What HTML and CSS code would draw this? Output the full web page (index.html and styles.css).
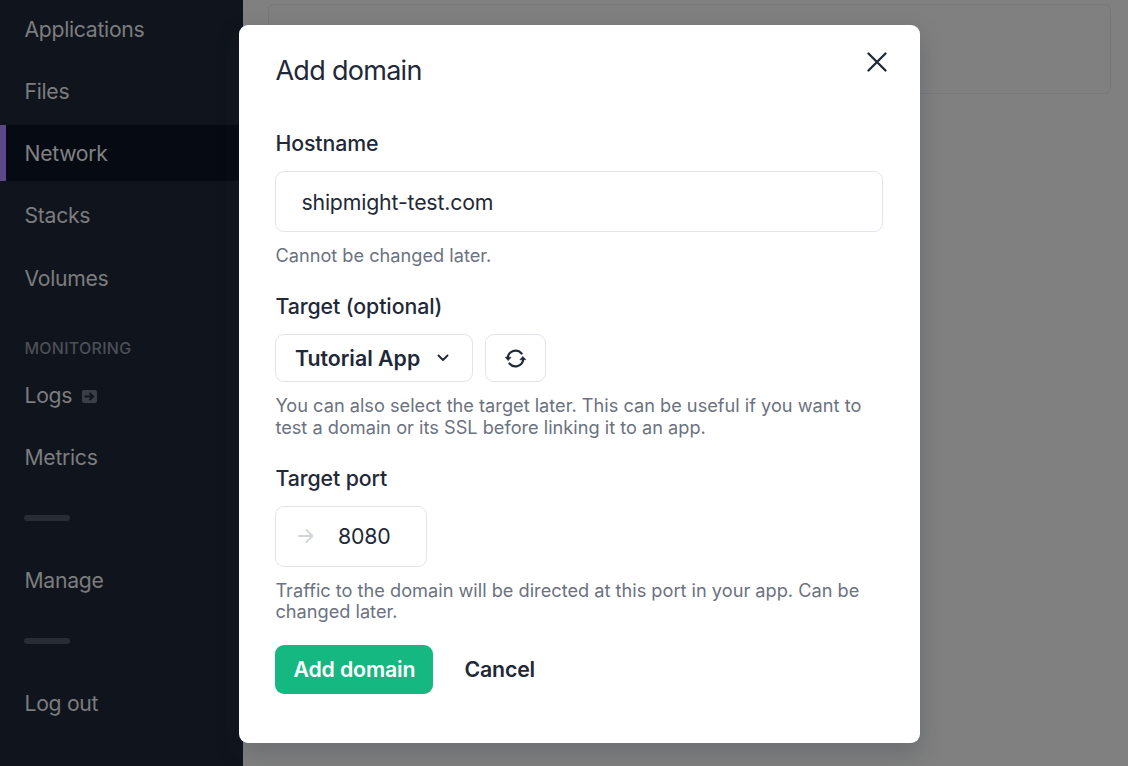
FILE: index.html
```html
<!DOCTYPE html>
<html lang="en">
<head>
<meta charset="utf-8">
<title>Add domain</title>
<link rel="stylesheet" href="styles.css">
</head>
<body>
<div class="app">
  <nav class="sidebar">
    <a class="nav-item">Applications</a>
    <a class="nav-item">Files</a>
    <a class="nav-item active">Network</a>
    <a class="nav-item">Stacks</a>
    <a class="nav-item">Volumes</a>
    <div class="nav-heading">MONITORING</div>
    <a class="nav-item">Logs
      <svg class="ext" viewBox="0 0 15 13"><rect width="15" height="13" rx="2" fill="#3a3e46"/><path d="M2.500 6.500h8M7.500 3l3.500 3.500L7.500 10" fill="none" stroke="#10141c" stroke-width="2"/></svg>
    </a>
    <a class="nav-item">Metrics</a>
    <div class="divider"></div>
    <a class="nav-item">Manage</a>
    <div class="divider"></div>
    <a class="nav-item">Log out</a>
  </nav>
  <main class="content"><div class="panel"></div></main>
</div>
<div class="overlay">
  <section class="modal">
    <header class="modal-head">
      <h1 class="title">Add domain</h1>
      <svg class="close" viewBox="0 0 20 20"><path d="M1.500 1.500l17 17M18.500 1.500l-17 17" fill="none" stroke="#1f2937" stroke-width="2.300" stroke-linecap="round"/></svg>
    </header>
    <label class="label">Hostname</label>
    <div class="input"><span class="hostname">shipmight-test.com</span></div>
    <p class="help">Cannot be changed later.</p>
    <label class="label">Target (optional)</label>
    <div class="row">
      <button class="button select"><span class="app-name">Tutorial App</span>
        <svg class="chevron" viewBox="0 0 12 8"><path d="M1.500 1.500L6 6l4.500-4.500" fill="none" stroke="#1f2937" stroke-width="1.900" stroke-linecap="round" stroke-linejoin="round"/></svg>
      </button>
      <button class="button reload">
        <svg class="sync" viewBox="0 0 20 20"><path d="M2.600 9.500A7.500 7.500 0 0 1 15.800 5.200M17.400 10.500A7.500 7.500 0 0 1 4.200 14.800" fill="none" stroke="#1f2937" stroke-width="2.100" stroke-linecap="round"/><path d="M.2 8.800h5.600L3 12zM14.200 11.200h5.600L17 8z" fill="#1f2937" stroke="#1f2937" stroke-width=".6" stroke-linejoin="round"/></svg>
      </button>
    </div>
    <p class="help">You can also select the target later. This can be useful if you want to<br>test a domain or its SSL before linking it to an app.</p>
    <label class="label">Target port</label>
    <div class="input port">
      <svg class="arrow" viewBox="0 0 16 16"><path d="M1 8h13M8.500 2l6 6-6 6" fill="none" stroke="#d1d5db" stroke-width="1.800" stroke-linecap="round" stroke-linejoin="round"/></svg>
      <span class="port-value">8080</span>
    </div>
    <p class="help">Traffic to the domain will be directed at this port in your app. Can be<br>changed later.</p>
    <div class="actions">
      <button class="primary">Add domain</button>
      <button class="cancel">Cancel</button>
    </div>
  </section>
</div>
</body>
</html>
```
FILE: styles.css
```css
* { box-sizing: border-box; }
body { margin: 0; width: 1128px; height: 766px; overflow: hidden; background: #808080; font-family: Inter, "Liberation Sans", sans-serif; color: #1f2937; }
.app { display: flex; height: 766px; }
.sidebar { width: 243px; flex: none; background: #10141c; display: flex; flex-direction: column; }
.nav-item { height: 56px; margin-bottom: 6.3px; padding-left: 24.500px; padding-top: 1px; display: flex; align-items: center; flex: none; font-size: 21.200px; letter-spacing: -.3px; color: #7c7d7f; }
.nav-item.active { background: #060a12; border-left: 6px solid #5c4888; padding-left: 18.500px; color: #808182; }
.nav-heading { height: 16px; margin: 29px 0 10px 24.500px; font-size: 16px; line-height: 16px; font-weight: 500; letter-spacing: .25px; color: #4b4f57; }
.ext { width: 15px; height: 13px; margin: 3px 0 0 9.800px; }
.divider { width: 46px; height: 6px; flex: none; margin: 24px 0 30.500px 24px; border-radius: 3px; background: #282c34; }
.content { flex: 1; padding: 4px 17px 0 25px; }
.panel { height: 90px; border: 1px solid #77777c; border-radius: 6px; }
.overlay { position: absolute; inset: 0; }
.modal { margin: 25px 0 0 239px; width: 681px; height: 718px; padding: 0 37px 0 36.400px; border-radius: 9px; background: #fff; box-shadow: 0 10px 24px rgba(31,41,55,.22); display: flex; flex-direction: column; }
.modal-head { height: 102px; flex: none; display: flex; justify-content: space-between; align-items: flex-start; }
.title { margin: 29px 0 0; font-size: 27px; line-height: 33px; font-weight: 400; letter-spacing: -.7px; }
.close { width: 20px; height: 20px; margin: 27px -4px 0 0; }
.label { height: 44px; padding-top: 4px; flex: none; font-size: 21.300px; line-height: 24px; font-weight: 500; letter-spacing: -.08px; }
.input { height: 61px; flex: none; border: 1px solid #e2e4e9; border-radius: 9px; display: flex; align-items: center; padding-left: 25px; font-size: 21.300px; letter-spacing: -.17px; }
.help { margin: 13px 0 23.500px; font-size: 18.200px; line-height: 21.500px; letter-spacing: 0; color: #6b7280; white-space: nowrap; }
.row { display: flex; gap: 12.500px; }
button { font: inherit; color: inherit; border: 0; background: none; padding: 0; margin: 0; }
.button { height: 48px; border: 1px solid #e2e4e9; border-radius: 9px; display: flex; align-items: center; }
.select { width: 197.500px; padding-left: 18.500px; font-size: 21.300px; font-weight: 600; }
.chevron { width: 12px; height: 8px; margin-left: 17px; }
.reload { width: 60.500px; justify-content: center; }
.sync { width: 21px; height: 21px; }
.port { width: 152px; padding-left: 21.500px; }
.arrow { width: 16px; height: 16px; margin-right: 24px; }
.actions { display: flex; align-items: center; margin-top: -1.500px; font-size: 21.300px; }
.primary, .cancel { font-weight: 600; letter-spacing: -.15px; }
.primary { width: 158px; height: 49px; border-radius: 9px; background: #15b881; color: #fff; }
.cancel { margin-left: 31px; }
```
